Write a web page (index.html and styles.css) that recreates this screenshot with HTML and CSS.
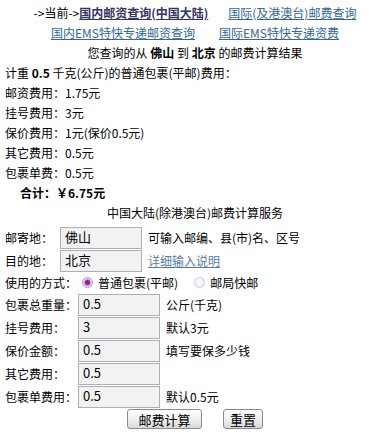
FILE: index.html
```html
<!DOCTYPE html>
<html lang="zh-CN">
<head>
    <meta charset="UTF-8">
    <title>国内邮资查询</title>
    <link rel="stylesheet" href="styles.css">
</head>
<body>
    <div class="page">
        <div class="line center">
            -&gt;当前-&gt;<a href="#" class="link current">国内邮资查询(中国大陆)</a><span class="gap"></span><a href="#" class="link">国际(及港澳台)邮费查询</a>
        </div>
        <div class="line center">
            <a href="#" class="link">国内EMS特快专递邮资查询</a><span class="gap wide"></span><a href="#" class="link">国际EMS特快专递资费</a>
        </div>
        <div class="line center">
            您查询的从 <b>佛山</b> 到 <b>北京</b> 的邮费计算结果
        </div>

        <div class="result">
            <div class="line">计重 <b>0.5</b> 千克(公斤)的普通包裹(平邮)费用：</div>
            <div class="line">邮资费用：1.75元</div>
            <div class="line">挂号费用：3元</div>
            <div class="line">保价费用：1元(保价0.5元)</div>
            <div class="line">其它费用：0.5元</div>
            <div class="line">包裹单费：0.5元</div>
            <div class="line total"><b>合计：￥6.75元</b></div>
        </div>

        <div class="line center">中国大陆(除港澳台)邮费计算服务</div>

        <form class="calc">
            <div class="field">
                <label class="field-label short">邮寄地：</label>
                <input type="text" class="field-input" value="佛山">
                <span class="field-note">可输入邮编、县(市)名、区号</span>
            </div>
            <div class="field">
                <label class="field-label short">目的地：</label>
                <input type="text" class="field-input" value="北京">
                <a href="#" class="field-note help">详细输入说明</a>
            </div>
            <div class="field radio-row">
                <span class="field-label">使用的方式：</span>
                <label class="choice"><input type="radio" name="way" checked>普通包裹(平邮)</label>
                <label class="choice"><input type="radio" name="way">邮局快邮</label>
            </div>
            <div class="field">
                <label class="field-label">包裹总重量：</label>
                <input type="text" class="field-input" value="0.5">
                <span class="field-note">公斤(千克)</span>
            </div>
            <div class="field">
                <label class="field-label">挂号费用：</label>
                <input type="text" class="field-input" value="3">
                <span class="field-note">默认3元</span>
            </div>
            <div class="field">
                <label class="field-label">保价金额：</label>
                <input type="text" class="field-input" value="0.5">
                <span class="field-note">填写要保多少钱</span>
            </div>
            <div class="field">
                <label class="field-label">其它费用：</label>
                <input type="text" class="field-input" value="0.5">
            </div>
            <div class="field">
                <label class="field-label">包裹单费用：</label>
                <input type="text" class="field-input" value="0.5">
                <span class="field-note">默认0.5元</span>
            </div>
            <div class="buttons">
                <button type="button" class="btn calc-btn">邮费计算</button>
                <button type="reset" class="btn">重置</button>
            </div>
        </form>
    </div>
</body>
</html>
```

FILE: styles.css
```css
* {
    margin: 0;
    padding: 0;
    box-sizing: border-box;
}

body {
    font-family: "Noto Sans CJK SC", "DejaVu Sans", sans-serif;
    font-size: 12px;
    color: #000;
    background: #fff;
    overflow: hidden;
}

.page {
    width: 390px;
    padding-top: 3px;
}

.line {
    height: 20px;
    line-height: 20px;
    white-space: nowrap;
}

.center {
    text-align: center;
}

.link {
    color: #336699;
    text-decoration: underline;
}

.link.current {
    color: #333366;
    font-weight: bold;
}

.gap {
    display: inline-block;
    width: 20px;
}

.gap.wide {
    width: 24px;
}

.result {
    padding-left: 5px;
}

.result .total {
    padding-left: 15px;
}

.calc {
    margin-top: 3px;
}

.field {
    display: flex;
    align-items: center;
    height: 23px;
    white-space: nowrap;
}

.field-label {
    width: 78px;
    padding-left: 5px;
}

.field-label.short {
    width: 60px;
}

.field-input {
    width: 82px;
    height: 22px;
    padding: 0 4px 3px;
    font-family: "Noto Sans CJK SC", "DejaVu Sans", sans-serif;
    font-size: 13px;
    color: #000;
    background: #f2f2f2;
    border: 1px solid #a9b0b8;
}

.field-note {
    margin-left: 6px;
}

.help {
    color: #5a7aa6;
    text-decoration: underline;
}

.radio-row {
    height: 21px;
}

.choice {
    display: flex;
    align-items: center;
    margin-right: 12px;
}

.choice input {
    appearance: none;
    width: 11px;
    height: 11px;
    margin: 0 5px 0 4px;
    border-radius: 50%;
    border: 1px solid #d6c6e0;
    background: radial-gradient(circle at 45% 40%, #ffffff, #ece2f2);
}

.choice input:checked {
    border-color: #b89ac8;
    background: radial-gradient(circle, #7a1f7a 0, #9b3a9b 2.5px, #e6d4ea 3.5px);
}

.buttons {
    display: flex;
    justify-content: center;
    gap: 21px;
    margin-top: 1px;
}

.btn {
    height: 20px;
    padding: 0 6px;
    font-family: "Noto Sans CJK SC", "DejaVu Sans", sans-serif;
    font-size: 13px;
    line-height: 17px;
    color: #000;
    background: linear-gradient(#ffffff, #ececec 60%, #d8d8d8);
    border: 1px solid #8a8a8a;
    border-radius: 3px;
}

.calc-btn {
    width: 75px;
}
```
